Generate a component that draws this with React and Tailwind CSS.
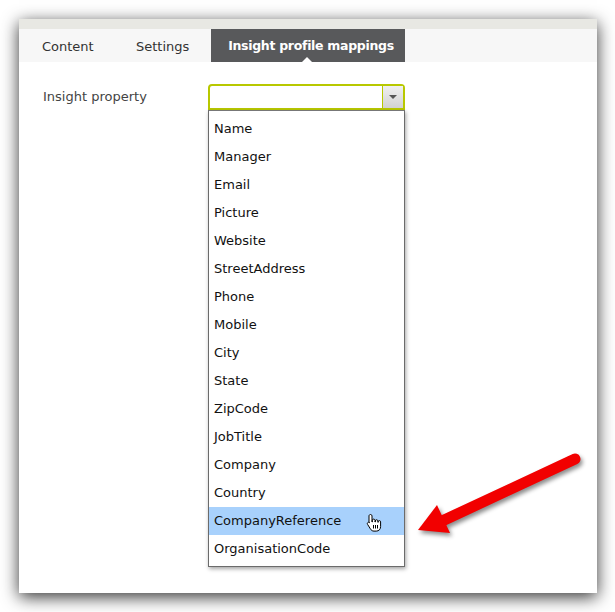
import React from 'react';

const items = [
  'Name',
  'Manager',
  'Email',
  'Picture',
  'Website',
  'StreetAddress',
  'Phone',
  'Mobile',
  'City',
  'State',
  'ZipCode',
  'JobTitle',
  'Company',
  'Country',
  'CompanyReference',
  'OrganisationCode',
];

function HandCursor() {
  return (
    <svg width="16" height="20" viewBox="0 0 16 20" className="absolute right-[22px] top-[6px]">
      <path
        d="M4.5 1.5c.8 0 1.5.6 1.5 1.4V9h.3V7.4c0-.8.6-1.3 1.4-1.3s1.3.5 1.3 1.3V9h.3V8c0-.8.6-1.3 1.3-1.3s1.3.5 1.3 1.3v1.3h.3v-.5c0-.8.6-1.2 1.2-1.2.7 0 1.2.5 1.2 1.2v4.7c0 2.7-1.7 4.6-4.3 4.6H8c-1.8 0-2.7-.8-3.6-2.2L1.6 11.4c-.5-.7-.3-1.5.3-1.9.6-.4 1.3-.2 1.8.4L3 9.2V2.9c0-.8.7-1.4 1.5-1.4z"
        fill="#fff"
        stroke="#000"
        strokeWidth="1"
      />
      <path d="M7.5 12v3.5M9.5 12v3.5M11.5 12v3.5" stroke="#000" strokeWidth="1" />
    </svg>
  );
}

function RedArrow() {
  return (
    <svg
      width="180"
      height="100"
      viewBox="0 0 180 100"
      className="absolute left-[410px] top-[448px]"
      style={{ filter: 'drop-shadow(2px 3px 2px rgba(0,0,0,0.45))' }}
    >
      <line x1="165" y1="11" x2="30" y2="74" stroke="#f20000" strokeWidth="11" strokeLinecap="round" />
      <polygon points="8,82 27,57 40,85" fill="#f20000" />
    </svg>
  );
}

export default function App() {
  return (
    <div className="relative w-[615px] h-[612px] bg-white" style={{ fontFamily: '"DejaVu Sans", Verdana, sans-serif' }}>
      <div className="absolute left-[19px] top-[19px] w-[578px] h-[574px] bg-white shadow-[0_4px_16px_rgba(0,0,0,0.8)] flex flex-col">
        <div className="h-[10px] bg-[#e8e8e3]" />
        <div className="h-[33px] bg-[#f7f7f7] flex items-stretch text-[13px] text-[#333]">
          <div className="pl-[23px] w-[117px] pt-[2px] flex items-center">Content</div>
          <div className="w-[75px] pt-[2px] flex items-center">Settings</div>
          <div className="relative w-[194px] bg-[#58595b] text-white font-bold flex items-center justify-center pl-[6px] pt-[2px] text-[12.5px] tracking-[-0.3px]">
            Insight profile mappings
            <div className="absolute left-[91px] bottom-0 w-0 h-0 border-l-[5px] border-r-[5px] border-b-[5px] border-l-transparent border-r-transparent border-b-white" />
          </div>
        </div>
        <div className="flex pt-[22px]">
          <div className="pl-[24px] w-[189px] pt-[3px] text-[13px] text-[#444]">Insight property</div>
          <div className="w-[197px]">
            <div className="h-[26px] flex border-2 border-[#b8c800] rounded-t-[4px] bg-white">
              <div className="flex-1 border-r border-[#b8c800]" />
              <div className="w-[20px] bg-gradient-to-b from-[#f0f0f0] to-[#d2d2d2] flex items-center justify-center">
                <div className="w-0 h-0 border-l-[4px] border-r-[4px] border-t-[4px] border-l-transparent border-r-transparent border-t-[#555]" />
              </div>
            </div>
            <div className="relative z-10 border border-[#6b6b6b] border-t-[#777] bg-white pt-[4px] pb-[3px] shadow-[1px_2px_4px_rgba(0,0,0,0.35)]">
              {items.map((it) => (
                <div
                  key={it}
                  className={`relative h-[28px] flex items-center pl-[5px] text-[13px] text-[#111] ${
                    it === 'CompanyReference' ? 'bg-[#a8d1fc]' : ''
                  }`}
                >
                  {it}
                  {it === 'CompanyReference' && <HandCursor />}
                </div>
              ))}
            </div>
          </div>
        </div>
      </div>
      <RedArrow />
    </div>
  );
}
